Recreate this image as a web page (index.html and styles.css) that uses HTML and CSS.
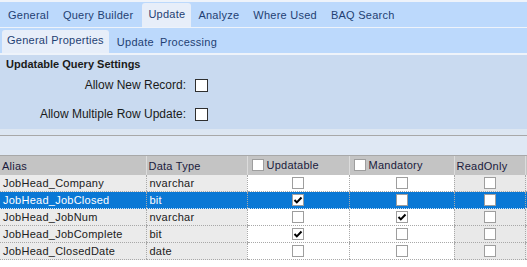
FILE: index.html
```html
<!DOCTYPE html>
<html lang="en">
<head>
    <meta charset="UTF-8">
    <title>BAQ Designer - Update</title>
    <link rel="stylesheet" href="styles.css">
</head>
<body>
    <div class="tab-strip main-tabs">
        <span class="tab">General</span>
        <span class="tab">Query Builder</span>
        <span class="tab active">Update</span>
        <span class="tab">Analyze</span>
        <span class="tab">Where Used</span>
        <span class="tab">BAQ Search</span>
    </div>
    <div class="tab-strip sub-tabs">
        <span class="tab active">General Properties</span>
        <span class="tab spaced">Update Processing</span>
    </div>

    <section class="settings">
        <h3>Updatable Query Settings</h3>
        <div class="settings-grid">
            <label>Allow New Record:</label>
            <span class="box dark"></span>
            <label>Allow Multiple Row Update:</label>
            <span class="box dark"></span>
        </div>
    </section>

    <div class="spacer"></div>
    <div class="toolbar-area"></div>

    <table class="grid">
        <colgroup>
            <col style="width:146px">
            <col style="width:101px">
            <col style="width:102px">
            <col style="width:105px">
            <col style="width:71px">
            <col>
        </colgroup>
        <thead>
            <tr>
                <th>Alias</th>
                <th>Data Type</th>
                <th><span class="box head"></span>Updatable</th>
                <th><span class="box head"></span>Mandatory</th>
                <th>ReadOnly</th>
                <th></th>
            </tr>
        </thead>
        <tbody>
            <tr>
                <td class="txt">JobHead_Company</td>
                <td class="txt">nvarchar</td>
                <td class="chk"><span class="box"></span></td>
                <td class="chk"><span class="box"></span></td>
                <td class="chk ro"><span class="box"></span></td>
                <td class="end"></td>
            </tr>
            <tr class="selected">
                <td class="txt">JobHead_JobClosed</td>
                <td class="txt">bit</td>
                <td class="chk"><span class="box checked"><svg viewBox="0 0 10 10" width="10" height="10"><path d="M1.5 5 L3.8 7.4 L8.5 2.5" fill="none" stroke="#000" stroke-width="2"/></svg></span></td>
                <td class="chk"><span class="box"></span></td>
                <td class="chk ro"><span class="box"></span></td>
                <td class="end"></td>
            </tr>
            <tr>
                <td class="txt">JobHead_JobNum</td>
                <td class="txt">nvarchar</td>
                <td class="chk"><span class="box"></span></td>
                <td class="chk"><span class="box checked"><svg viewBox="0 0 10 10" width="10" height="10"><path d="M1.5 5 L3.8 7.4 L8.5 2.5" fill="none" stroke="#000" stroke-width="2"/></svg></span></td>
                <td class="chk ro"><span class="box"></span></td>
                <td class="end"></td>
            </tr>
            <tr>
                <td class="txt">JobHead_JobComplete</td>
                <td class="txt">bit</td>
                <td class="chk"><span class="box checked"><svg viewBox="0 0 10 10" width="10" height="10"><path d="M1.5 5 L3.8 7.4 L8.5 2.5" fill="none" stroke="#000" stroke-width="2"/></svg></span></td>
                <td class="chk"><span class="box"></span></td>
                <td class="chk ro"><span class="box"></span></td>
                <td class="end"></td>
            </tr>
            <tr>
                <td class="txt">JobHead_ClosedDate</td>
                <td class="txt">date</td>
                <td class="chk"><span class="box"></span></td>
                <td class="chk"><span class="box"></span></td>
                <td class="chk ro"><span class="box"></span></td>
                <td class="end"></td>
            </tr>
        </tbody>
    </table>
</body>
</html>
```

FILE: styles.css
```css
:root {
    --tab-bg: #bcd9fc;
    --tab-active: #e7eef9;
    --tab-text: #1f3f73;
    --panel-bg: #c9daf0;
    --area-bg: #dfe8f4;
    --line: #a8a8a8;
    --header-bg: #c4c4c4;
    --cell-bg: #ebebeb;
    --select-bg: #0a78d5;
}

body {
    font-family: 'Liberation Sans', Arial, sans-serif;
    margin: 0;
    padding: 0;
    background-color: #fff;
    color: #1a1a1a;
}

.tab-strip {
    display: flex;
    align-items: flex-end;
    background-color: var(--tab-bg);
    font-size: 11px;
    letter-spacing: 0.25px;
    color: var(--tab-text);
}

.main-tabs {
    height: 25px;
    border-top: 2px solid #eef3fa;
    border-bottom: 1px solid #eef3fa;
    padding-left: 1px;
}

.sub-tabs {
    height: 25px;
    border-bottom: 2px solid #eef3fa;
    padding-left: 2px;
}

.tab {
    padding: 0 7px;
    height: 24px;
    line-height: 24px;
    white-space: nowrap;
}

.tab.active {
    background-color: var(--tab-active);
    border-radius: 3px 3px 0 0;
    padding: 0 6px;
    line-height: 22px;
}

.main-tabs .tab.active {
    margin-left: 2px;
    margin-right: 0;
}

.sub-tabs .tab.active {
    height: 23px;
    padding: 0 5px;
    line-height: 20px;
}

.tab.spaced {
    word-spacing: 3px;
    padding-left: 8px;
    line-height: 26px;
}

.settings {
    background-color: var(--panel-bg);
    height: 74px;
    box-sizing: border-box;
    padding: 1px 0 0 6px;
}

.settings h3 {
    margin: 0;
    font-size: 11px;
    line-height: 16px;
    color: #1a1a1a;
}

.settings-grid {
    display: grid;
    grid-template-columns: 180px 13px;
    column-gap: 9px;
    row-gap: 15px;
    align-items: center;
    margin-top: 6px;
    font-size: 12px;
}

.settings-grid label {
    text-align: right;
}

.spacer {
    height: 6px;
    background-color: #dce6f2;
    border-bottom: 1px solid var(--line);
}

.toolbar-area {
    height: 19px;
    background-color: var(--area-bg);
    border-bottom: 1px solid var(--line);
}

.box {
    display: inline-block;
    box-sizing: border-box;
    width: 12px;
    height: 12px;
    background-color: #fff;
    border: 1px solid #9e9e9e;
    vertical-align: middle;
    position: relative;
}

.box.dark {
    width: 13px;
    height: 13px;
    border-color: #2f2f2f;
}

.box.head {
    margin: 0 3px 0 2px;
    position: relative;
    top: -1px;
}

.box.checked svg {
    position: absolute;
    left: 0;
    top: 0;
}

.grid {
    width: 100%;
    border-collapse: collapse;
    table-layout: fixed;
    font-size: 11px;
    letter-spacing: 0.25px;
}

.grid th {
    background-color: var(--header-bg);
    height: 19px;
    padding: 0 0 0 2px;
    text-align: left;
    font-weight: normal;
    color: #1b1b3d;
    border-left: 1px solid #dcdcdc;
    white-space: nowrap;
}

.grid th:first-child {
    border-left: none;
}

.grid td {
    height: 16px;
    padding: 0;
    border-bottom: 1px dotted var(--line);
    border-left: 1px dotted var(--line);
    white-space: nowrap;
}

.grid td:first-child {
    border-left: none;
}

.grid td.txt {
    background-color: var(--cell-bg);
    padding-left: 3px;
    color: #202020;
}

.grid td.chk {
    text-align: center;
    background-color: #fff;
    line-height: 0;
}

.grid td.ro {
    background-color: #e9e9e9;
}

.grid td.end {
    background-color: var(--cell-bg);
}

.grid tr.selected td {
    background-color: var(--select-bg);
    color: #fff;
    border-bottom-color: #cfe3f7;
}
```
